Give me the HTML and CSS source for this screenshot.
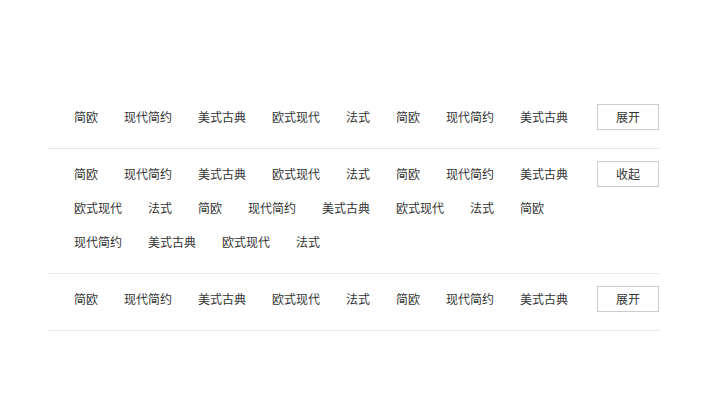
FILE: index.html
```html
<!DOCTYPE html>
<html lang="zh-CN">
<head>
    <meta charset="UTF-8">
    <meta name="viewport" content="width=device-width, initial-scale=1.0">
    <title>风格筛选</title>
    <link rel="stylesheet" href="styles.css">
</head>
<body>
    <div class="filter">
        <div class="filter-row">
            <div class="tags collapsed">
                <a href="#">简欧</a><a href="#">现代简约</a><a href="#">美式古典</a><a href="#">欧式现代</a><a href="#">法式</a>
                <a href="#">简欧</a><a href="#">现代简约</a><a href="#">美式古典</a><a href="#">欧式现代</a><a href="#">法式</a>
                <a href="#">简欧</a><a href="#">现代简约</a><a href="#">美式古典</a><a href="#">欧式现代</a><a href="#">法式</a>
                <a href="#">简欧</a><a href="#">现代简约</a><a href="#">美式古典</a><a href="#">欧式现代</a><a href="#">法式</a>
            </div>
            <button class="toggle">展开</button>
        </div>

        <div class="filter-row">
            <div class="tags">
                <a href="#">简欧</a><a href="#">现代简约</a><a href="#">美式古典</a><a href="#">欧式现代</a><a href="#">法式</a>
                <a href="#">简欧</a><a href="#">现代简约</a><a href="#">美式古典</a><a href="#">欧式现代</a><a href="#">法式</a>
                <a href="#">简欧</a><a href="#">现代简约</a><a href="#">美式古典</a><a href="#">欧式现代</a><a href="#">法式</a>
                <a href="#">简欧</a><a href="#">现代简约</a><a href="#">美式古典</a><a href="#">欧式现代</a><a href="#">法式</a>
            </div>
            <button class="toggle">收起</button>
        </div>

        <div class="filter-row">
            <div class="tags collapsed">
                <a href="#">简欧</a><a href="#">现代简约</a><a href="#">美式古典</a><a href="#">欧式现代</a><a href="#">法式</a>
                <a href="#">简欧</a><a href="#">现代简约</a><a href="#">美式古典</a><a href="#">欧式现代</a><a href="#">法式</a>
                <a href="#">简欧</a><a href="#">现代简约</a><a href="#">美式古典</a><a href="#">欧式现代</a><a href="#">法式</a>
                <a href="#">简欧</a><a href="#">现代简约</a><a href="#">美式古典</a><a href="#">欧式现代</a><a href="#">法式</a>
            </div>
            <button class="toggle">展开</button>
        </div>
    </div>
</body>
</html>
```

FILE: styles.css
```css
body {
    margin: 0;
    padding: 92px 0 0 48px;
    background-color: #fff;
    font-family: "Noto Sans CJK SC", "Microsoft YaHei", sans-serif;
    font-size: 12px;
    color: #333;
}
.filter {
    width: 611px;
}
.filter-row {
    display: flex;
    align-items: flex-start;
    padding: 8px 0 14px;
    border-bottom: 1px solid #e8e8e8;
}
.tags {
    flex: 1;
    display: flex;
    flex-wrap: wrap;
}
.tags a {
    margin-left: 26px;
    line-height: 34px;
    color: #333;
    text-decoration: none;
    white-space: nowrap;
}
.tags a:hover {
    color: #e4393c;
}
/* folded list keeps only the first line of styles */
.tags.collapsed a:nth-child(n+9) {
    display: none;
}
.toggle {
    flex: none;
    width: 62px;
    height: 26px;
    margin-top: 4px;
    padding: 0;
    border: 1px solid #ccc;
    background: #fff;
    font-family: inherit;
    font-size: 12px;
    color: #333;
    line-height: 24px;
    cursor: pointer;
}
```
